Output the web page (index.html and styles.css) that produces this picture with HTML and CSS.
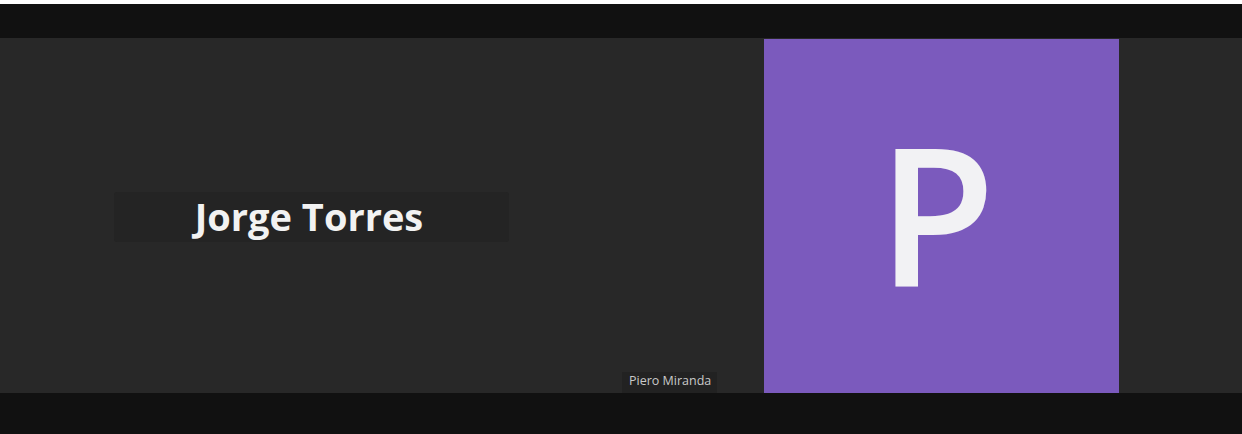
FILE: index.html
```html
<!DOCTYPE html>
<html>
<head>
<meta charset="utf-8">
<link rel="stylesheet" href="styles.css">
</head>
<body>
<div class="screen">
  <div class="strip"></div>
  <div class="topbar"></div>
  <div class="main">
    <div class="tile tile-left">
      <div class="namebox">Jorge Torres</div>
    </div>
    <div class="tile tile-right">
      <div class="avatar">P</div>
      <div class="label">Piero Miranda</div>
    </div>
  </div>
  <div class="bottombar"></div>
</div>
</body>
</html>
```
FILE: styles.css
```css
html, body {
  margin: 0;
  padding: 0;
  background: #111111;
}
.screen {
  width: 1242px;
  height: 434px;
  display: flex;
  flex-direction: column;
  overflow: hidden;
}
.strip {
  height: 4px;
  background: #ffffff;
}
.topbar {
  height: 34px;
  background: #111111;
}
.main {
  height: 355px;
  background: #282828;
  display: flex;
}
.bottombar {
  height: 41px;
  background: #111111;
}
.tile {
  height: 100%;
}
.tile-left {
  width: 622px;
  display: flex;
  align-items: center;
  justify-content: center;
}
.namebox {
  width: 395px;
  height: 50px;
  margin-top: 3px;
  background: #242424;
  border-radius: 3px;
  display: flex;
  align-items: center;
  justify-content: center;
  color: #f2f2f2;
  font-family: "Open Sans", "Liberation Sans", sans-serif;
  font-weight: 700;
  font-size: 38px;
  line-height: 1;
  padding-bottom: 2px;
  padding-right: 4px;
  box-sizing: border-box;
}
.tile-right {
  flex: 1;
  position: relative;
  display: flex;
  align-items: flex-start;
}
.avatar {
  margin-left: 142px;
  margin-top: 1px;
  width: 355px;
  height: 354px;
  padding-right: 10px;
  padding-bottom: 6px;
  box-sizing: border-box;
  background: #7b5abd;
  color: #f2f2f4;
  font-family: "Open Sans", "Liberation Sans", sans-serif;
  font-weight: 600;
  font-size: 192px;
  line-height: 1;
  display: flex;
  align-items: center;
  justify-content: center;
}
.label {
  position: absolute;
  left: 0;
  bottom: 0;
  padding: 3px 6px 6px 7px;
  background: #222222;
  color: #c9c9c9;
  font-family: "Open Sans", "Liberation Sans", sans-serif;
  font-size: 12.5px;
  line-height: 12px;
}
```
